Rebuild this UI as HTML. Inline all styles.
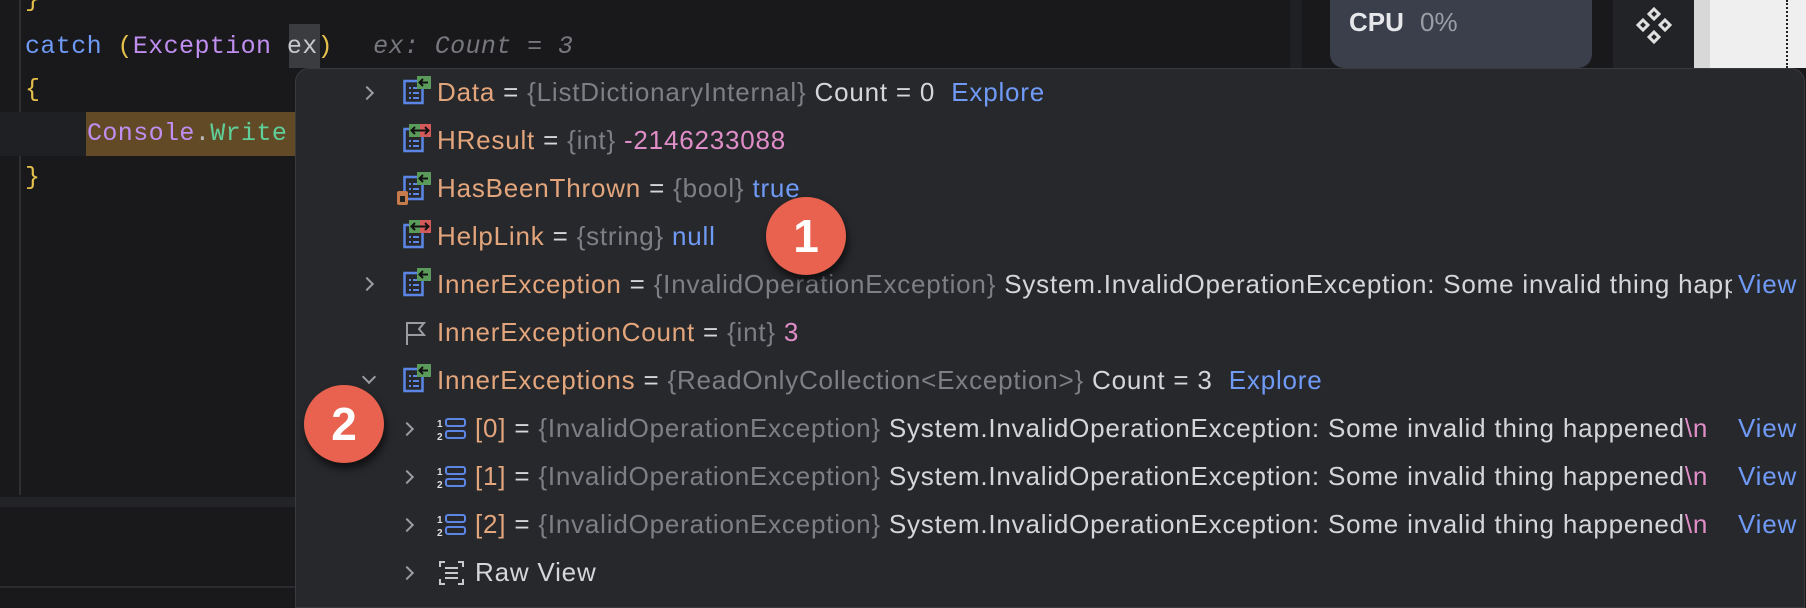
<!DOCTYPE html>
<html><head><meta charset="utf-8"><style>
*{margin:0;padding:0;box-sizing:border-box}
body{width:1806px;height:598px;overflow:hidden;background:#19191c;position:relative;font-family:"Liberation Sans",sans-serif}
.a{position:absolute;white-space:nowrap}
.code{font-family:"Liberation Mono",monospace;font-size:25px;line-height:44px;letter-spacing:0.4px}
.pop{position:absolute;left:295px;top:68px;width:1510px;height:540px;background:#27282c;border-radius:14px 14px 0 0;border:1px solid #3a3b3f;overflow:hidden}
.row{position:absolute;height:48px;line-height:48px;font-size:26px;letter-spacing:0.8px;color:#d5d6d9;white-space:nowrap}
.n{color:#e3a57c}.t{color:#7d7f85}.b{color:#6f9af6}.p{color:#e08ec8}
.chev{position:absolute;width:10px;height:10px;border-right:2px solid #9a9ca1;border-bottom:2px solid #9a9ca1}
.badge{position:absolute;width:80px;height:78px;border-radius:50%;background:#e8624f;color:#fff;font-size:46px;font-weight:bold;text-align:center;line-height:78px;box-shadow:2px 6px 8px rgba(0,0,0,.6)}
</style></head><body>
<div class="a" style="left:19px;top:0;width:2px;height:495px;background:#2e2f33"></div>
<div class="a" style="left:0;top:112px;width:296px;height:44px;background:#1f2023"></div>
<div class="a" style="left:86px;top:112px;width:210px;height:44px;background:#634a27"></div>
<div class="a" style="left:289px;top:24px;width:31px;height:44px;background:#3b3c3f"></div>
<div class="a code" style="left:25px;top:-22px;color:#e5c04a">}</div>
<div class="a code" style="left:25px;top:25px"><span style="color:#6f9af6">catch</span> <span style="color:#e5c04a">(</span><span style="color:#c08ef0">Exception</span> <span style="color:#c8c9cc">ex</span><span style="color:#e5c04a">)</span><i style="color:#76787e;margin-left:40px">ex: Count = 3</i></div>
<div class="a code" style="left:25px;top:68px;color:#e5c04a">{</div>
<div class="a code" style="left:87px;top:112px"><span style="color:#c08ef0">Console</span><span style="color:#bbb">.</span><span style="color:#5fcf9a">Write</span></div>
<div class="a code" style="left:25px;top:156px;color:#e5c04a">}</div>
<div class="a" style="left:0;top:497px;width:296px;height:10px;background:#232427"></div>
<div class="a" style="left:0;top:586px;width:296px;height:2px;background:#2a2b2e"></div>
<div class="a" style="left:1290px;top:0;width:12px;height:68px;background:#1f2023"></div>
<div class="a" style="left:1302px;top:0;width:28px;height:68px;background:#19191c"></div>
<div class="a" style="left:1330px;top:-20px;width:262px;height:88px;background:#3a3f4b;border-radius:14px"></div>
<div class="a" style="left:1349px;top:7px;font-size:26px;font-weight:bold;color:#e6e7ea">CPU</div>
<div class="a" style="left:1420px;top:7px;font-size:26px;color:#9a9ea6">0%</div>
<div class="a" style="left:1613px;top:0;width:81px;height:68px;background:#222326"></div>
<svg class="a" style="left:1634px;top:6px" width="40" height="40" viewBox="0 0 40 40" fill="none" stroke="#e0e0e0" stroke-width="3"><path d="M20 3l5 5-5 5-5-5z M9 14l5 5-5 5-5-5z M31 14l5 5-5 5-5-5z M20 26l5 5-5 5-5-5z"/></svg>
<div class="a" style="left:1694px;top:0;width:16px;height:68px;background:#d8d8d8"></div>
<div class="a" style="left:1710px;top:0;width:96px;height:68px;background:#efefef"></div>
<div class="a" style="left:1786px;top:0;width:0;height:68px;border-left:2px dotted #222"></div>
<div class="pop">
<svg width="0" height="0" style="position:absolute"><defs>
<g id="doc"><rect x="1.5" y="6" width="18" height="22" fill="none" stroke="#5b86e6" stroke-width="2.5"/><path d="M6 13h2M10 13h6M6 18h2M10 18h6M6 23h2M10 23h6" stroke="#5b86e6" stroke-width="2"/></g>
</defs></svg>
</div>
<div class="chev a" style="left:362px;top:88px;transform:rotate(-45deg)"></div>
<div class="chev a" style="left:362px;top:279px;transform:rotate(-45deg)"></div>
<div class="chev a" style="left:364px;top:372px;transform:rotate(45deg)"></div>
<div class="chev a" style="left:402px;top:424px;transform:rotate(-45deg)"></div>
<div class="chev a" style="left:402px;top:472px;transform:rotate(-45deg)"></div>
<div class="chev a" style="left:402px;top:520px;transform:rotate(-45deg)"></div>
<div class="chev a" style="left:402px;top:568px;transform:rotate(-45deg)"></div>
<svg class="a" style="left:403px;top:75px" width="30" height="30"><use href="#doc"/><rect x="14" y="1" width="14" height="13" fill="#5a9a5a"/><path d="M25 7.5h-8M20 4l-3.5 3.5L20 11" stroke="#111" stroke-width="2" fill="none"/></svg>
<svg class="a" style="left:403px;top:123px" width="30" height="30"><use href="#doc"/><rect x="6" y="1" width="11" height="13" fill="#5a9a5a"/><rect x="17" y="1" width="11" height="13" fill="#d45a5a"/><path d="M9 7.5h16M12 4l-3.5 3.5L12 11M22 4l3.5 3.5L22 11" stroke="#111" stroke-width="2" fill="none"/></svg>
<svg class="a" style="left:396px;top:171px" width="37" height="36"><g transform="translate(7,0)"><use href="#doc"/><rect x="14" y="1" width="14" height="13" fill="#5a9a5a"/><path d="M25 7.5h-8M20 4l-3.5 3.5L20 11" stroke="#111" stroke-width="2" fill="none"/></g><rect x="1" y="20" width="11" height="14" rx="2" fill="#c57b4a"/><rect x="4" y="25" width="5" height="6" fill="#222"/></svg>
<svg class="a" style="left:403px;top:219px" width="30" height="30"><use href="#doc"/><rect x="6" y="1" width="11" height="13" fill="#5a9a5a"/><rect x="17" y="1" width="11" height="13" fill="#d45a5a"/><path d="M9 7.5h16M12 4l-3.5 3.5L12 11M22 4l3.5 3.5L22 11" stroke="#111" stroke-width="2" fill="none"/></svg>
<svg class="a" style="left:403px;top:267px" width="30" height="30"><use href="#doc"/><rect x="14" y="1" width="14" height="13" fill="#5a9a5a"/><path d="M25 7.5h-8M20 4l-3.5 3.5L20 11" stroke="#111" stroke-width="2" fill="none"/></svg>
<svg class="a" style="left:404px;top:320px" width="26" height="26"><path d="M3 25V3h17l-5 6 5 6H3" stroke="#9a9ca1" stroke-width="2" fill="none"/></svg>
<svg class="a" style="left:403px;top:363px" width="30" height="30"><use href="#doc"/><rect x="14" y="1" width="14" height="13" fill="#5a9a5a"/><path d="M25 7.5h-8M20 4l-3.5 3.5L20 11" stroke="#111" stroke-width="2" fill="none"/></svg>
<svg class="a" style="left:437px;top:416px" width="30" height="26"><text x="0" y="11" font-size="10" font-weight="bold" fill="#ddd" font-family="Liberation Sans">1</text><text x="0" y="24" font-size="10" font-weight="bold" fill="#ddd" font-family="Liberation Sans">2</text><rect x="9" y="3" width="19" height="7" rx="2" stroke="#5b86e6" stroke-width="2" fill="none"/><rect x="9" y="15" width="19" height="7" rx="2" stroke="#5b86e6" stroke-width="2" fill="none"/></svg>
<svg class="a" style="left:437px;top:464px" width="30" height="26"><text x="0" y="11" font-size="10" font-weight="bold" fill="#ddd" font-family="Liberation Sans">1</text><text x="0" y="24" font-size="10" font-weight="bold" fill="#ddd" font-family="Liberation Sans">2</text><rect x="9" y="3" width="19" height="7" rx="2" stroke="#5b86e6" stroke-width="2" fill="none"/><rect x="9" y="15" width="19" height="7" rx="2" stroke="#5b86e6" stroke-width="2" fill="none"/></svg>
<svg class="a" style="left:437px;top:512px" width="30" height="26"><text x="0" y="11" font-size="10" font-weight="bold" fill="#ddd" font-family="Liberation Sans">1</text><text x="0" y="24" font-size="10" font-weight="bold" fill="#ddd" font-family="Liberation Sans">2</text><rect x="9" y="3" width="19" height="7" rx="2" stroke="#5b86e6" stroke-width="2" fill="none"/><rect x="9" y="15" width="19" height="7" rx="2" stroke="#5b86e6" stroke-width="2" fill="none"/></svg>
<svg class="a" style="left:438px;top:560px" width="30" height="26"><path d="M2 7V2h5M20 2h5v5M25 19v5h-5M7 24H2v-5M7 8h13M7 13h13M7 18h13" stroke="#c8c9cc" stroke-width="2" fill="none"/></svg>
<div class="row" style="left:437px;top:68px"><span class="n">Data</span> = <span class="t">{ListDictionaryInternal}</span> Count = 0 &nbsp;<span class="b">Explore</span></div>
<div class="row" style="left:437px;top:116px"><span class="n">HResult</span> = <span class="t">{int}</span> <span class="p">-2146233088</span></div>
<div class="row" style="left:437px;top:164px"><span class="n">HasBeenThrown</span> = <span class="t">{bool}</span> <span class="b">true</span></div>
<div class="row" style="left:437px;top:212px"><span class="n">HelpLink</span> = <span class="t">{string}</span> <span class="b">null</span></div>
<div class="row" style="left:437px;top:260px;width:1296px;overflow:hidden"><span class="n">InnerException</span> = <span class="t">{InvalidOperationException}</span> System.InvalidOperationException: Some invalid thing happ</div>
<div class="row" style="left:437px;top:308px"><span class="n">InnerExceptionCount</span> = <span class="t">{int}</span> <span class="p">3</span></div>
<div class="row" style="left:437px;top:356px"><span class="n">InnerExceptions</span> = <span class="t">{ReadOnlyCollection&lt;Exception&gt;}</span> Count = 3 &nbsp;<span class="b">Explore</span></div>
<div class="row" style="left:475px;top:404px;width:1258px;overflow:hidden"><span class="n">[0]</span> = <span class="t">{InvalidOperationException}</span> System.InvalidOperationException: Some invalid thing happened<span class="p">\n</span></div>
<div class="row" style="left:475px;top:452px;width:1258px;overflow:hidden"><span class="n">[1]</span> = <span class="t">{InvalidOperationException}</span> System.InvalidOperationException: Some invalid thing happened<span class="p">\n</span></div>
<div class="row" style="left:475px;top:500px;width:1258px;overflow:hidden"><span class="n">[2]</span> = <span class="t">{InvalidOperationException}</span> System.InvalidOperationException: Some invalid thing happened<span class="p">\n</span></div>
<div class="row" style="left:475px;top:548px">Raw View</div>
<div class="row b" style="left:1738px;top:260px;background:#27282c;padding-left:6px;margin-left:-6px">View</div>
<div class="row b" style="left:1738px;top:404px">View</div>
<div class="row b" style="left:1738px;top:452px">View</div>
<div class="row b" style="left:1738px;top:500px">View</div>
<div class="badge" style="left:766px;top:197px">1</div>
<div class="badge" style="left:304px;top:385px">2</div>
</body></html>
